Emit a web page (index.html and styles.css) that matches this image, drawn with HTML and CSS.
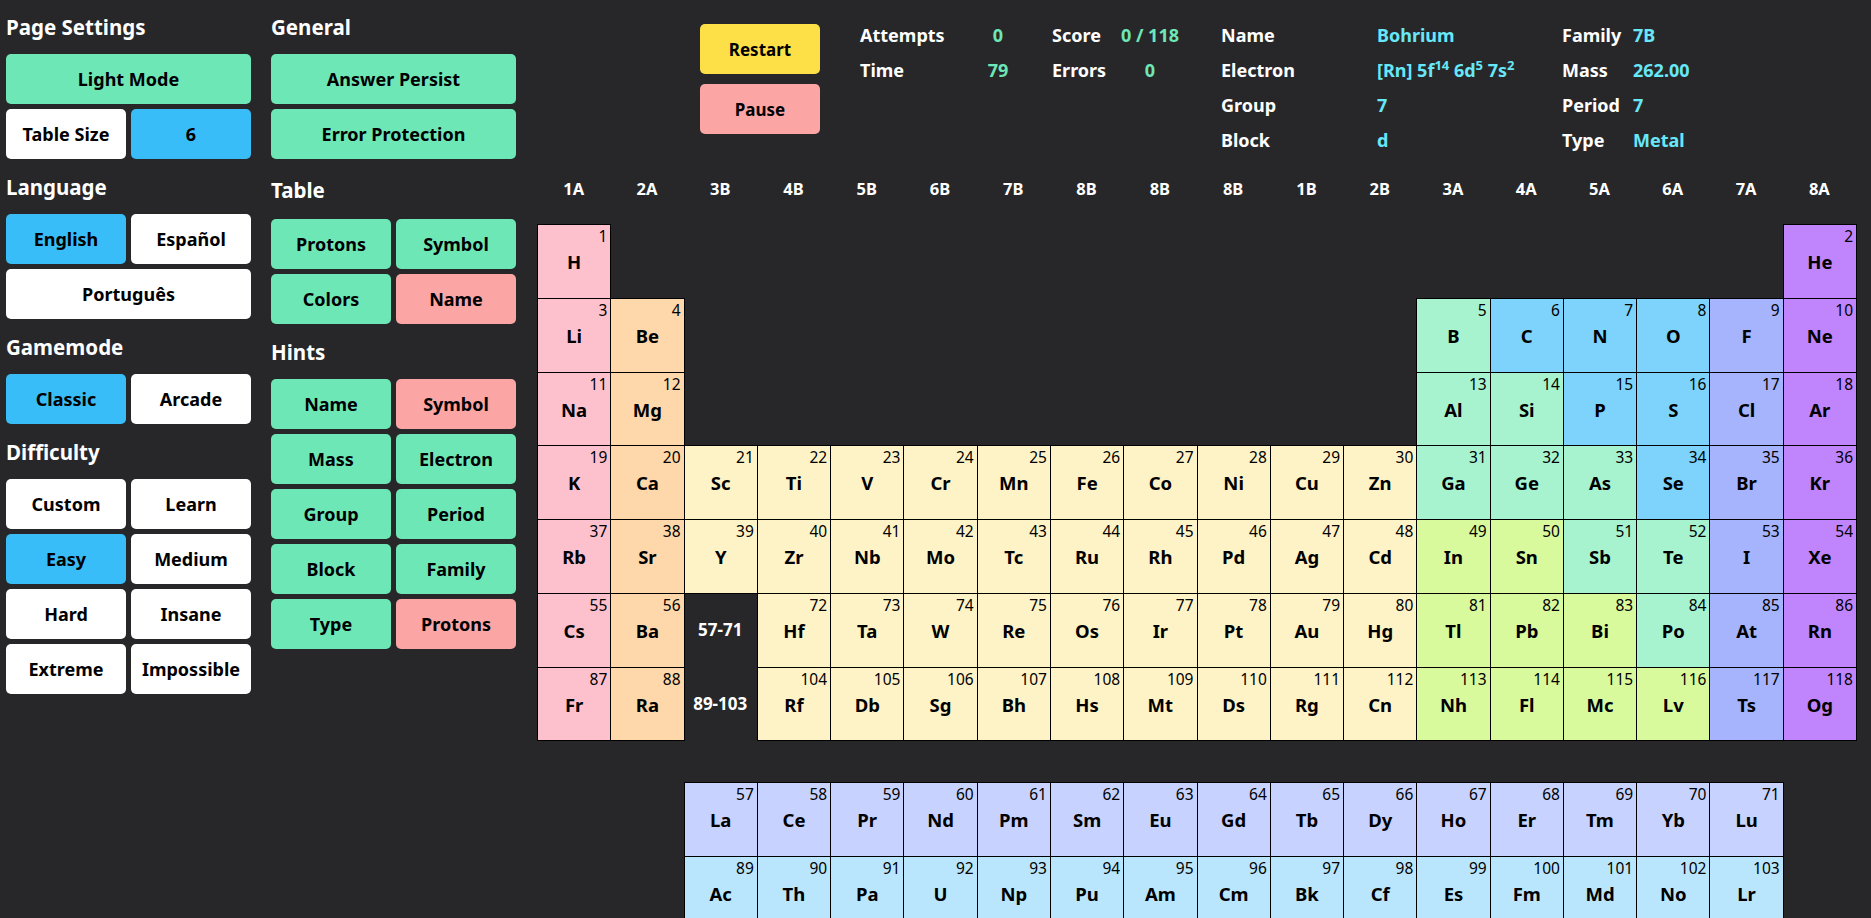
FILE: index.html
```html
<!DOCTYPE html>
<html lang="en">
<head>
<meta charset="utf-8">
<title>Periodic Table Quiz</title>
<link rel="stylesheet" href="styles.css">
</head>
<body>
<div class="app">
  <aside class="settings">
    <div class="col">
      <section class="group">
        <h2 class="group-title">Page Settings</h2>
        <div class="btn-grid">
          <button class="btn green span2">Light Mode</button>
          <button class="btn white">Table Size</button>
          <button class="btn blue">6</button>
        </div>
      </section>
      <section class="group">
        <h2 class="group-title">Language</h2>
        <div class="btn-grid">
          <button class="btn blue">English</button>
          <button class="btn white">Español</button>
          <button class="btn white span2">Português</button>
        </div>
      </section>
      <section class="group">
        <h2 class="group-title">Gamemode</h2>
        <div class="btn-grid">
          <button class="btn blue">Classic</button>
          <button class="btn white">Arcade</button>
        </div>
      </section>
      <section class="group">
        <h2 class="group-title">Difficulty</h2>
        <div class="btn-grid">
          <button class="btn white">Custom</button>
          <button class="btn white">Learn</button>
          <button class="btn blue">Easy</button>
          <button class="btn white">Medium</button>
          <button class="btn white">Hard</button>
          <button class="btn white">Insane</button>
          <button class="btn white">Extreme</button>
          <button class="btn white">Impossible</button>
        </div>
      </section>
    </div>
    <div class="col">
      <section class="group">
        <h2 class="group-title">General</h2>
        <div class="btn-grid">
          <button class="btn green span2">Answer Persist</button>
          <button class="btn green span2">Error Protection</button>
        </div>
      </section>
      <section class="group">
        <h2 class="group-title tall">Table</h2>
        <div class="btn-grid">
          <button class="btn green">Protons</button>
          <button class="btn green">Symbol</button>
          <button class="btn green">Colors</button>
          <button class="btn red">Name</button>
        </div>
      </section>
      <section class="group">
        <h2 class="group-title">Hints</h2>
        <div class="btn-grid">
          <button class="btn green">Name</button>
          <button class="btn red">Symbol</button>
          <button class="btn green">Mass</button>
          <button class="btn green">Electron</button>
          <button class="btn green">Group</button>
          <button class="btn green">Period</button>
          <button class="btn green">Block</button>
          <button class="btn green">Family</button>
          <button class="btn green">Type</button>
          <button class="btn red">Protons</button>
        </div>
      </section>
    </div>
  </aside>

  <main class="board">
    <div class="topbar">
      <div class="controls">
        <button class="ctl yellow">Restart</button>
        <button class="ctl pink">Pause</button>
      </div>
      <div class="stats">
        <span>Attempts</span><span class="val">0</span><span class="lab2">Score</span><span class="val">0 / 118</span>
        <span>Time</span><span class="val">79</span><span class="lab2">Errors</span><span class="val">0</span>
      </div>
      <div class="info">
        <span>Name</span><span class="val">Bohrium</span><span>Family</span><span class="val">7B</span>
        <span>Electron</span><span class="val">[Rn] 5f<sup>14</sup> 6d<sup>5</sup> 7s<sup>2</sup></span><span>Mass</span><span class="val">262.00</span>
        <span>Group</span><span class="val">7</span><span>Period</span><span class="val">7</span>
        <span>Block</span><span class="val">d</span><span>Type</span><span class="val">Metal</span>
      </div>
    </div>

    <div class="groups">
      <span>1A</span><span>2A</span><span>3B</span><span>4B</span><span>5B</span><span>6B</span><span>7B</span><span>8B</span><span>8B</span><span>8B</span><span>1B</span><span>2B</span><span>3A</span><span>4A</span><span>5A</span><span>6A</span><span>7A</span><span>8A</span>
    </div>

    <div class="ptable">
      <div class="el alk"><span class="num">1</span><span class="sym">H</span></div>
      <div class="el ng c18"><span class="num">2</span><span class="sym">He</span></div>

      <div class="el alk"><span class="num">3</span><span class="sym">Li</span></div>
      <div class="el ae"><span class="num">4</span><span class="sym">Be</span></div>
      <div class="el md c13"><span class="num">5</span><span class="sym">B</span></div>
      <div class="el nm"><span class="num">6</span><span class="sym">C</span></div>
      <div class="el nm"><span class="num">7</span><span class="sym">N</span></div>
      <div class="el nm"><span class="num">8</span><span class="sym">O</span></div>
      <div class="el hal"><span class="num">9</span><span class="sym">F</span></div>
      <div class="el ng"><span class="num">10</span><span class="sym">Ne</span></div>

      <div class="el alk"><span class="num">11</span><span class="sym">Na</span></div>
      <div class="el ae"><span class="num">12</span><span class="sym">Mg</span></div>
      <div class="el md c13"><span class="num">13</span><span class="sym">Al</span></div>
      <div class="el md"><span class="num">14</span><span class="sym">Si</span></div>
      <div class="el nm"><span class="num">15</span><span class="sym">P</span></div>
      <div class="el nm"><span class="num">16</span><span class="sym">S</span></div>
      <div class="el hal"><span class="num">17</span><span class="sym">Cl</span></div>
      <div class="el ng"><span class="num">18</span><span class="sym">Ar</span></div>

      <div class="el alk"><span class="num">19</span><span class="sym">K</span></div>
      <div class="el ae"><span class="num">20</span><span class="sym">Ca</span></div>
      <div class="el tm"><span class="num">21</span><span class="sym">Sc</span></div>
      <div class="el tm"><span class="num">22</span><span class="sym">Ti</span></div>
      <div class="el tm"><span class="num">23</span><span class="sym">V</span></div>
      <div class="el tm"><span class="num">24</span><span class="sym">Cr</span></div>
      <div class="el tm"><span class="num">25</span><span class="sym">Mn</span></div>
      <div class="el tm"><span class="num">26</span><span class="sym">Fe</span></div>
      <div class="el tm"><span class="num">27</span><span class="sym">Co</span></div>
      <div class="el tm"><span class="num">28</span><span class="sym">Ni</span></div>
      <div class="el tm"><span class="num">29</span><span class="sym">Cu</span></div>
      <div class="el tm"><span class="num">30</span><span class="sym">Zn</span></div>
      <div class="el md"><span class="num">31</span><span class="sym">Ga</span></div>
      <div class="el md"><span class="num">32</span><span class="sym">Ge</span></div>
      <div class="el md"><span class="num">33</span><span class="sym">As</span></div>
      <div class="el nm"><span class="num">34</span><span class="sym">Se</span></div>
      <div class="el hal"><span class="num">35</span><span class="sym">Br</span></div>
      <div class="el ng"><span class="num">36</span><span class="sym">Kr</span></div>

      <div class="el alk"><span class="num">37</span><span class="sym">Rb</span></div>
      <div class="el ae"><span class="num">38</span><span class="sym">Sr</span></div>
      <div class="el tm"><span class="num">39</span><span class="sym">Y</span></div>
      <div class="el tm"><span class="num">40</span><span class="sym">Zr</span></div>
      <div class="el tm"><span class="num">41</span><span class="sym">Nb</span></div>
      <div class="el tm"><span class="num">42</span><span class="sym">Mo</span></div>
      <div class="el tm"><span class="num">43</span><span class="sym">Tc</span></div>
      <div class="el tm"><span class="num">44</span><span class="sym">Ru</span></div>
      <div class="el tm"><span class="num">45</span><span class="sym">Rh</span></div>
      <div class="el tm"><span class="num">46</span><span class="sym">Pd</span></div>
      <div class="el tm"><span class="num">47</span><span class="sym">Ag</span></div>
      <div class="el tm"><span class="num">48</span><span class="sym">Cd</span></div>
      <div class="el ptm"><span class="num">49</span><span class="sym">In</span></div>
      <div class="el ptm"><span class="num">50</span><span class="sym">Sn</span></div>
      <div class="el md"><span class="num">51</span><span class="sym">Sb</span></div>
      <div class="el md"><span class="num">52</span><span class="sym">Te</span></div>
      <div class="el hal"><span class="num">53</span><span class="sym">I</span></div>
      <div class="el ng"><span class="num">54</span><span class="sym">Xe</span></div>

      <div class="el alk"><span class="num">55</span><span class="sym">Cs</span></div>
      <div class="el ae"><span class="num">56</span><span class="sym">Ba</span></div>
      <div class="ph">57-71</div>
      <div class="el tm"><span class="num">72</span><span class="sym">Hf</span></div>
      <div class="el tm"><span class="num">73</span><span class="sym">Ta</span></div>
      <div class="el tm"><span class="num">74</span><span class="sym">W</span></div>
      <div class="el tm"><span class="num">75</span><span class="sym">Re</span></div>
      <div class="el tm"><span class="num">76</span><span class="sym">Os</span></div>
      <div class="el tm"><span class="num">77</span><span class="sym">Ir</span></div>
      <div class="el tm"><span class="num">78</span><span class="sym">Pt</span></div>
      <div class="el tm"><span class="num">79</span><span class="sym">Au</span></div>
      <div class="el tm"><span class="num">80</span><span class="sym">Hg</span></div>
      <div class="el ptm"><span class="num">81</span><span class="sym">Tl</span></div>
      <div class="el ptm"><span class="num">82</span><span class="sym">Pb</span></div>
      <div class="el ptm"><span class="num">83</span><span class="sym">Bi</span></div>
      <div class="el md"><span class="num">84</span><span class="sym">Po</span></div>
      <div class="el hal"><span class="num">85</span><span class="sym">At</span></div>
      <div class="el ng"><span class="num">86</span><span class="sym">Rn</span></div>

      <div class="el alk"><span class="num">87</span><span class="sym">Fr</span></div>
      <div class="el ae"><span class="num">88</span><span class="sym">Ra</span></div>
      <div class="ph">89-103</div>
      <div class="el tm"><span class="num">104</span><span class="sym">Rf</span></div>
      <div class="el tm"><span class="num">105</span><span class="sym">Db</span></div>
      <div class="el tm"><span class="num">106</span><span class="sym">Sg</span></div>
      <div class="el tm"><span class="num">107</span><span class="sym">Bh</span></div>
      <div class="el tm"><span class="num">108</span><span class="sym">Hs</span></div>
      <div class="el tm"><span class="num">109</span><span class="sym">Mt</span></div>
      <div class="el tm"><span class="num">110</span><span class="sym">Ds</span></div>
      <div class="el tm"><span class="num">111</span><span class="sym">Rg</span></div>
      <div class="el tm"><span class="num">112</span><span class="sym">Cn</span></div>
      <div class="el ptm"><span class="num">113</span><span class="sym">Nh</span></div>
      <div class="el ptm"><span class="num">114</span><span class="sym">Fl</span></div>
      <div class="el ptm"><span class="num">115</span><span class="sym">Mc</span></div>
      <div class="el ptm"><span class="num">116</span><span class="sym">Lv</span></div>
      <div class="el hal"><span class="num">117</span><span class="sym">Ts</span></div>
      <div class="el ng"><span class="num">118</span><span class="sym">Og</span></div>
    </div>

    <div class="ftable">
      <div class="el lan c3"><span class="num">57</span><span class="sym">La</span></div>
      <div class="el lan"><span class="num">58</span><span class="sym">Ce</span></div>
      <div class="el lan"><span class="num">59</span><span class="sym">Pr</span></div>
      <div class="el lan"><span class="num">60</span><span class="sym">Nd</span></div>
      <div class="el lan"><span class="num">61</span><span class="sym">Pm</span></div>
      <div class="el lan"><span class="num">62</span><span class="sym">Sm</span></div>
      <div class="el lan"><span class="num">63</span><span class="sym">Eu</span></div>
      <div class="el lan"><span class="num">64</span><span class="sym">Gd</span></div>
      <div class="el lan"><span class="num">65</span><span class="sym">Tb</span></div>
      <div class="el lan"><span class="num">66</span><span class="sym">Dy</span></div>
      <div class="el lan"><span class="num">67</span><span class="sym">Ho</span></div>
      <div class="el lan"><span class="num">68</span><span class="sym">Er</span></div>
      <div class="el lan"><span class="num">69</span><span class="sym">Tm</span></div>
      <div class="el lan"><span class="num">70</span><span class="sym">Yb</span></div>
      <div class="el lan"><span class="num">71</span><span class="sym">Lu</span></div>

      <div class="el act c3"><span class="num">89</span><span class="sym">Ac</span></div>
      <div class="el act"><span class="num">90</span><span class="sym">Th</span></div>
      <div class="el act"><span class="num">91</span><span class="sym">Pa</span></div>
      <div class="el act"><span class="num">92</span><span class="sym">U</span></div>
      <div class="el act"><span class="num">93</span><span class="sym">Np</span></div>
      <div class="el act"><span class="num">94</span><span class="sym">Pu</span></div>
      <div class="el act"><span class="num">95</span><span class="sym">Am</span></div>
      <div class="el act"><span class="num">96</span><span class="sym">Cm</span></div>
      <div class="el act"><span class="num">97</span><span class="sym">Bk</span></div>
      <div class="el act"><span class="num">98</span><span class="sym">Cf</span></div>
      <div class="el act"><span class="num">99</span><span class="sym">Es</span></div>
      <div class="el act"><span class="num">100</span><span class="sym">Fm</span></div>
      <div class="el act"><span class="num">101</span><span class="sym">Md</span></div>
      <div class="el act"><span class="num">102</span><span class="sym">No</span></div>
      <div class="el act"><span class="num">103</span><span class="sym">Lr</span></div>
    </div>
  </main>
</div>
</body>
</html>
```

FILE: styles.css
```css
html, body {
  margin: 0;
  padding: 0;
  overflow: hidden;
}

body {
  background: #27272a;
  color: #ffffff;
  font-family: "Noto Sans", "Open Sans", sans-serif;
}

.app {
  display: flex;
  gap: 21px;
  padding-left: 6px;
}

/* ---------- settings panel ---------- */
.settings {
  display: flex;
  gap: 20px;
  width: 510px;
  flex-shrink: 0;
}

.col {
  width: 245px;
}

.group-title {
  margin: 13px 0 12px;
  font-size: 20.5px;
  line-height: 30px;
  font-weight: 700;
}

.col .group:first-child .group-title {
  margin-top: 12px;
}

.group-title.tall {
  margin-top: 16px;
  margin-bottom: 14px;
}

.btn-grid {
  display: grid;
  grid-template-columns: 1fr 1fr;
  gap: 5px;
}

.btn {
  height: 50px;
  padding: 0;
  border: none;
  border-radius: 5px;
  font-family: inherit;
  font-size: 18px;
  font-weight: 700;
  color: #000;
}

.span2 { grid-column: span 2; }
.green { background: #6ee7b7; }
.blue { background: #38bdf8; }
.white { background: #ffffff; }
.red { background: #fca5a5; }

/* ---------- board ---------- */
.board {
  width: 1319px;
  flex-shrink: 0;
}

.topbar {
  box-sizing: border-box;
  height: 166px;
  padding-top: 18px;
  display: flex;
  justify-content: center;
  align-items: flex-start;
}

.controls {
  width: 120px;
  margin-top: 6px;
  margin-right: 40px;
  display: flex;
  flex-direction: column;
  gap: 10px;
}

.ctl {
  height: 50px;
  padding: 0;
  border: none;
  border-radius: 5px;
  font-family: inherit;
  font-size: 17px;
  font-weight: 700;
  color: #000;
}

.yellow { background: #fde047; }
.pink { background: #fca5a5; }

.stats {
  display: grid;
  grid-template-columns: 100px 76px 76px 76px;
  grid-auto-rows: 35px;
  line-height: 35px;
  font-size: 18px;
  font-weight: 700;
  white-space: nowrap;
}

.stats .val {
  text-align: center;
  color: #6ee7b7;
}

.stats .lab2 {
  padding-left: 16px;
}

.info {
  margin-left: 33px;
  display: grid;
  grid-template-columns: 156px 185px 71px 60px;
  grid-auto-rows: 35px;
  line-height: 35px;
  font-size: 18px;
  font-weight: 700;
  white-space: nowrap;
}

.info .val {
  color: #67e8f9;
}

.info sup {
  font-size: 13px;
  line-height: 0;
  vertical-align: 7px;
}

.groups {
  display: grid;
  grid-template-columns: repeat(18, 1fr);
  height: 46px;
  line-height: 46px;
  text-align: center;
  font-size: 16.5px;
  font-weight: 700;
}

.ptable,
.ftable {
  display: grid;
  grid-template-columns: repeat(18, 1fr);
  grid-auto-rows: 73.75px;
}

.ptable { margin-top: 12px; }
.ftable { margin-top: 41.5px; }

.c3 { grid-column-start: 3; }
.c13 { grid-column-start: 13; }
.c18 { grid-column-start: 18; }

.el {
  margin: 0 -1px -1px 0;
  border: 1px solid #000;
  display: flex;
  flex-direction: column;
  color: #000;
}

.num {
  padding: 2px 3px 0 0;
  font-size: 15.5px;
  line-height: 18px;
  text-align: right;
}

.sym {
  margin-top: 5px;
  font-size: 18.5px;
  line-height: 24px;
  font-weight: 700;
  text-align: center;
}

.ph {
  display: flex;
  align-items: center;
  justify-content: center;
  font-size: 17px;
  font-weight: 700;
  color: #fff;
}

.alk { background: #fcc1cc; }
.ae  { background: #fed7aa; }
.tm  { background: #fef3c7; }
.md  { background: #a7f3d0; }
.nm  { background: #7dd3fc; }
.hal { background: #a5b4fc; }
.ng  { background: #c084fc; }
.ptm { background: #d9f99d; }
.lan { background: #c7d2fe; }
.act { background: #bae6fd; }
```
